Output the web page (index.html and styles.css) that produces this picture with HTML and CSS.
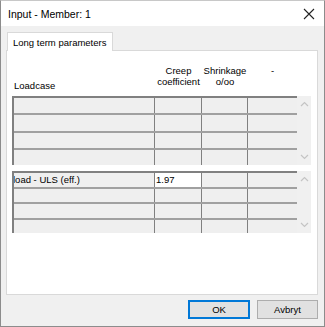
FILE: index.html
```html
<!doctype html>
<html lang="en">
  <head>
    <meta charset="utf-8" />
    <title>Input - Member: 1</title>
    <link rel="stylesheet" href="styles.css">
  </head>
  <body>
    <div class="window">
      <div class="titlebar">
        <div class="title">Input - Member: 1</div>
        <svg class="close" width="12" height="12" viewBox="0 0 12 12">
          <path d="M1 1 L11 11 M11 1 L1 11" stroke="#222" stroke-width="1.1" fill="none" />
        </svg>
      </div>

      <div class="body">
        <div class="tabs">
          <div class="tab">Long term parameters</div>
        </div>
        <div class="panel">
          <div class="head">
            <div class="h_load">Loadcase</div>
            <div class="h_col">Creep<br>coefficient</div>
            <div class="h_col">Shrinkage<br>o/oo</div>
            <div class="h_col">-</div>
          </div>

          <div class="grid_wrap">
            <div class="grid rows17">
              <div class="cell"></div><div class="cell"></div><div class="cell"></div><div class="cell"></div>
              <div class="cell"></div><div class="cell"></div><div class="cell"></div><div class="cell"></div>
              <div class="cell"></div><div class="cell"></div><div class="cell"></div><div class="cell"></div>
              <div class="cell"></div><div class="cell"></div><div class="cell"></div><div class="cell"></div>
            </div>
            <div class="scroll">
              <svg width="9" height="6" viewBox="0 0 9 6"><path d="M1 5 L4.5 1.5 L8 5" stroke="#c4c4c4" stroke-width="1.2" fill="none" /></svg>
              <svg width="9" height="6" viewBox="0 0 9 6"><path d="M1 1 L4.5 4.5 L8 1" stroke="#c4c4c4" stroke-width="1.2" fill="none" /></svg>
            </div>
          </div>

          <div class="grid_wrap second">
            <div class="grid rows15">
              <div class="cell clip">load - ULS (eff.)</div><div class="cell edit">1.97</div><div class="cell"></div><div class="cell"></div>
              <div class="cell"></div><div class="cell"></div><div class="cell"></div><div class="cell"></div>
              <div class="cell"></div><div class="cell"></div><div class="cell"></div><div class="cell"></div>
              <div class="cell"></div><div class="cell"></div><div class="cell"></div><div class="cell"></div>
            </div>
            <div class="scroll">
              <svg width="9" height="6" viewBox="0 0 9 6"><path d="M1 5 L4.5 1.5 L8 5" stroke="#c4c4c4" stroke-width="1.2" fill="none" /></svg>
              <svg width="9" height="6" viewBox="0 0 9 6"><path d="M1 1 L4.5 4.5 L8 1" stroke="#c4c4c4" stroke-width="1.2" fill="none" /></svg>
            </div>
          </div>
        </div>

        <div class="buttons">
          <div class="btn default">OK</div>
          <div class="btn">Avbryt</div>
        </div>
      </div>
    </div>
  </body>
</html>
```

FILE: styles.css
```css
body {
  margin: 0;
  font-family: "Liberation Sans", Arial, sans-serif;
  font-size: 9.5px;
  color: #000;
}

.window {
  width: 325px;
  height: 327px;
  box-sizing: border-box;
  border: 1px solid #8c8c8c;
  border-top-color: #c8c8c8;
  background-color: #f0f0f0;
  display: flex;
  flex-direction: column;
}

.titlebar {
  height: 25px;
  background-color: #fff;
  display: flex;
  align-items: center;
  justify-content: space-between;
  padding-left: 7px;
  padding-right: 9px;
  font-size: 10.5px;
}

.body {
  flex: 1;
  padding: 6px 6px 0 5px;
  display: flex;
  flex-direction: column;
}

.tabs {
  display: flex;
  padding-left: 1px;
}

.tab {
  background-color: #fff;
  border: 1px solid #d9d9d9;
  border-bottom: none;
  height: 18px;
  line-height: 19px;
  padding: 0 6px 0 5px;
  margin-bottom: -1px;
  position: relative;
}

.panel {
  height: 245px;
  box-sizing: border-box;
  background-color: #fff;
  border: 1px solid #d9d9d9;
  padding: 0 0 0 5px;
}

.head {
  display: grid;
  grid-template-columns: 143px 47px 46px 49px;
  height: 45px;
}

.h_load {
  align-self: end;
  padding-left: 2px;
  padding-bottom: 5px;
}

.h_col {
  text-align: center;
  padding-top: 14px;
  line-height: 11px;
}

.grid_wrap {
  display: flex;
  height: 69px;
}

.grid_wrap.second {
  margin-top: 6px;
  height: 62px;
}

.grid {
  display: grid;
  grid-template-columns: 141px 47px 46px 49px;
  border-top: 2px solid #808080;
  border-left: 2px solid #808080;
  border-bottom: 2px solid #808080;
  background-color: #a0a0a0;
  row-gap: 2px;
}

.rows17 {
  grid-template-rows: repeat(4, 15.25px);
}

.rows15 {
  grid-template-rows: repeat(4, 13.5px);
}

.cell {
  background-color: #efefef;
  border-right: 1px solid #808080;
  white-space: nowrap;
  overflow: hidden;
  line-height: 14px;
}

.cell:nth-child(4n) {
  border-right: none;
}

.clip {
  text-indent: -1px;
}

.edit {
  background-color: #fff;
  padding-left: 1px;
}

.scroll {
  width: 14px;
  background-color: #f0f0f0;
  display: flex;
  flex-direction: column;
  justify-content: space-between;
  align-items: center;
  padding: 5px 0;
  box-sizing: border-box;
}

.buttons {
  display: flex;
  justify-content: flex-end;
  gap: 7px;
  padding-top: 5px;
}

.btn {
  width: 61px;
  height: 19px;
  box-sizing: border-box;
  border: 1px solid #adadad;
  background-color: #e1e1e1;
  display: flex;
  align-items: center;
  justify-content: center;
}

.btn.default {
  border: 2px solid #0078d7;
  width: 62px;
}
```
